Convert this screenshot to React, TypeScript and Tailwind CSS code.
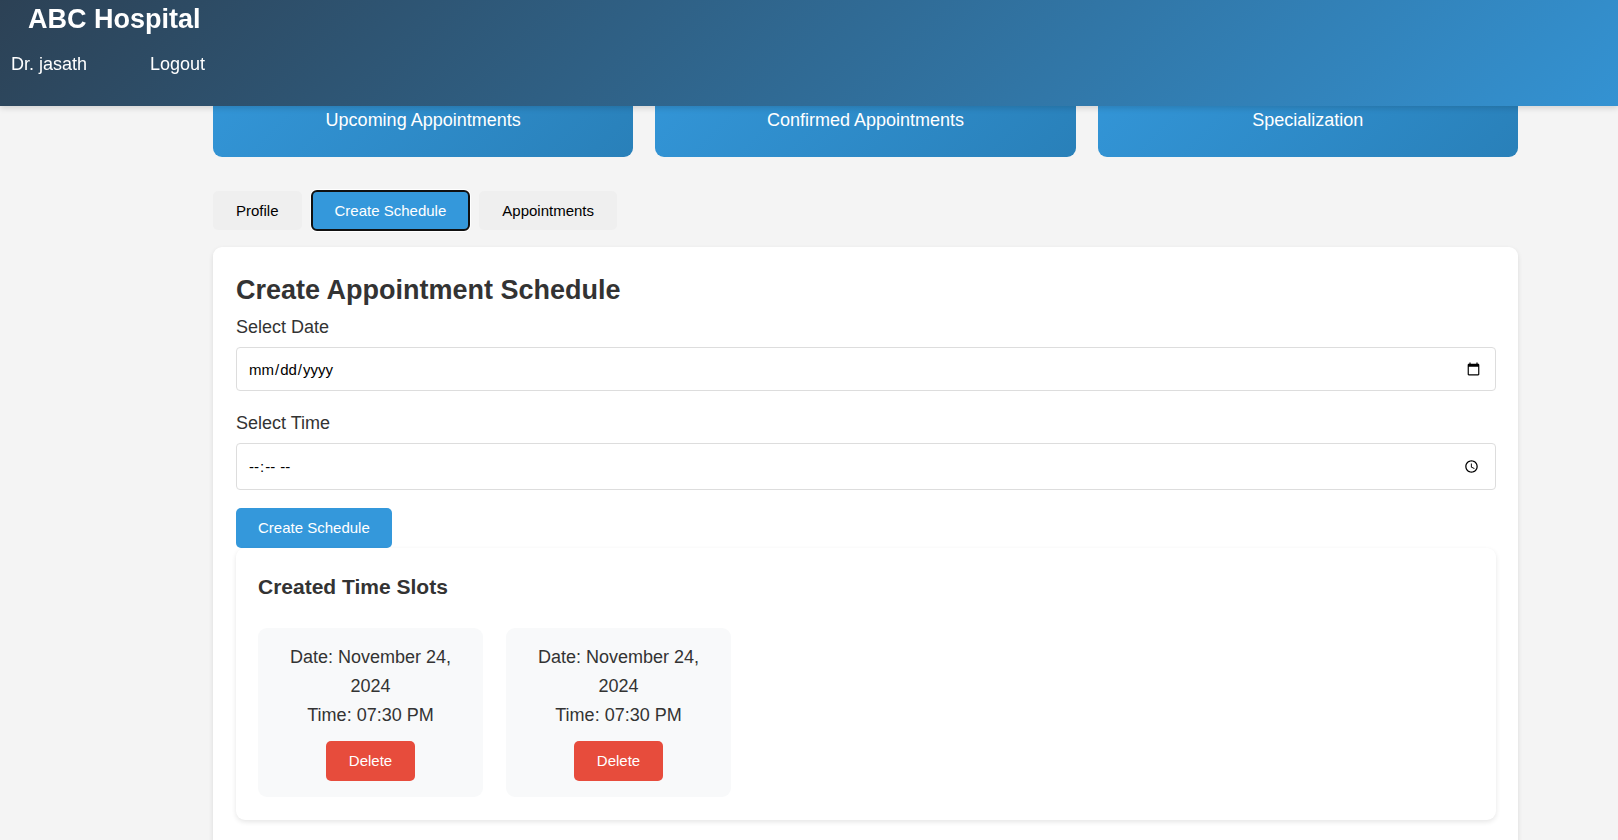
import { useState } from 'react';

const stats = ['Upcoming Appointments', 'Confirmed Appointments', 'Specialization'];
const tabs = ['Profile', 'Create Schedule', 'Appointments'];
const initialSlots = [
  { id: 1, date: 'November 24, 2024', time: '07:30 PM' },
  { id: 2, date: 'November 24, 2024', time: '07:30 PM' },
];

function Header() {
  return (
    <header className="fixed inset-x-0 top-0 z-10 h-[106px] bg-linear-[135deg,#2c3e50_-4%,#3498db_107%] text-white shadow-[0_2px_6px_rgba(0,0,0,0.15)]">
      <h1 className="px-7 pt-px text-[27px] leading-9 font-bold">ABC Hospital</h1>
      <nav className="mt-[13px] flex gap-[63px] px-[11px]">
        <a href="#profile">Dr. jasath</a>
        <a href="#logout">Logout</a>
      </nav>
    </header>
  );
}

export default function App() {
  const [active, setActive] = useState('Create Schedule');
  const [slots, setSlots] = useState(initialSlots);

  return (
    <div className="min-h-screen bg-[#f4f4f4] font-['Liberation_Sans',Arial,sans-serif] text-[18px] leading-[29px] text-[#333]">
      <Header />
      <main className="pt-[26px] pr-[100px] pb-6 pl-[213px]">
        <section className="grid grid-cols-3 gap-[22px]">
          {stats.map((label) => (
            <div
              key={label}
              className="rounded-[9px] bg-linear-[135deg,#3498db,#2980b9] px-[22px] pt-20 pb-[22px] text-center text-white"
            >
              {label}
            </div>
          ))}
        </section>

        <div className="mt-[34px] flex gap-[10px]">
          {tabs.map((tab) => (
            <button
              key={tab}
              type="button"
              onClick={() => setActive(tab)}
              className={
                tab === active
                  ? 'rounded-[5px] bg-[#3498db] px-[23px] py-[11px] text-[15px] leading-[17px] text-white shadow-[0_0_0_2px_#fff] outline-2 -outline-offset-1 outline-[#101010]'
                  : 'rounded-[5px] bg-[#efefef] px-[23px] py-[11px] text-[15px] leading-[17px] text-black'
              }
            >
              {tab}
            </button>
          ))}
        </div>

        <section className="mt-[17px] rounded-[9px] bg-white pt-[22px] pr-[22px] pb-10 pl-[23px] shadow-[0_2px_5px_rgba(0,0,0,0.1)]">
          <h2 className="mb-[2px] text-[27px] leading-[42px] font-bold">Create Appointment Schedule</h2>
          <form onSubmit={(e) => e.preventDefault()}>
            <label htmlFor="date" className="block">
              Select Date
            </label>
            <input
              id="date"
              type="date"
              className="mt-[5px] block h-11 w-full rounded-[4px] border border-[#ddd] bg-white pr-3 pl-[11px] text-[15px] text-black"
            />
            <label htmlFor="time" className="mt-[18px] block">
              Select Time
            </label>
            <input
              id="time"
              type="time"
              className="mt-[5px] block h-[47px] w-full rounded-[4px] border border-[#ddd] bg-white pr-3 pl-[11px] text-[15px] text-black"
            />
            <button
              type="submit"
              className="mt-[18px] block rounded-[5px] bg-[#3498db] px-[22px] py-[11px] text-[15px] leading-[18px] text-white"
            >
              Create Schedule
            </button>
          </form>

          <section className="rounded-[9px] bg-white px-[22px] pt-[22px] pb-[23px] shadow-[0_2px_5px_rgba(0,0,0,0.1)]">
            <h3 className="text-[21px] leading-[34px] font-bold">Created Time Slots</h3>
            <ul className="mt-[24px] flex flex-wrap gap-[23px]">
              {slots.map((slot) => (
                <li key={slot.id} className="w-[225px] rounded-[9px] bg-[#f8f9fa] px-4 pt-[15px] pb-4 text-center">
                  <p>Date: {slot.date}</p>
                  <p>Time: {slot.time}</p>
                  <button
                    type="button"
                    onClick={() => setSlots(slots.filter((s) => s.id !== slot.id))}
                    className="mt-[11px] rounded-[5px] bg-[#e74c3c] px-[23px] py-[11px] text-[15px] leading-[18px] text-white"
                  >
                    Delete
                  </button>
                </li>
              ))}
            </ul>
          </section>
        </section>
      </main>
    </div>
  );
}
